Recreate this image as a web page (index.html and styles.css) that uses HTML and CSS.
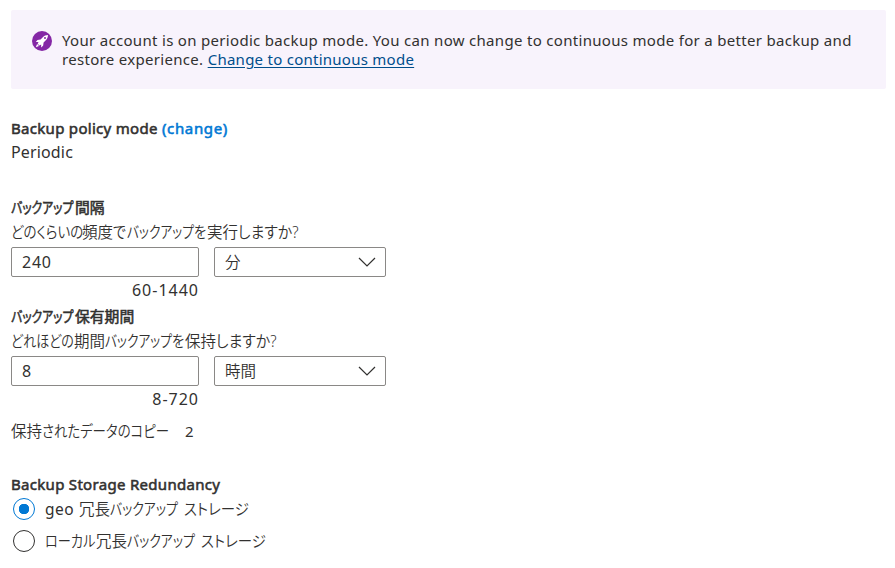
FILE: index.html
```html
<!DOCTYPE html>
<html lang="ja">
<head>
<meta charset="utf-8">
<title>Backup policy</title>
<link rel="stylesheet" href="styles.css">
</head>
<body>
<main class="page">
  <div class="banner">
    <svg class="rocket" viewBox="0 0 20 20" aria-hidden="true">
      <circle cx="10" cy="10" r="10" fill="#8427a5"/>
      <path d="M16 4c-2.200.1-3.800.8-5.200 2.300L8.600 8.500 5.500 9 3.800 11l2.700-.1-.8 1.800 1.700 1.700 1.800-.8-.1 2.900 2-1.800.5-3.200 2.200-2.200C15.200 7.900 15.900 6.200 16 4z" fill="#fff"/>
      <circle cx="13" cy="7" r="1" fill="#8427a5"/>
      <path d="M3.800 16.200l1.300-3.200 1.900 1.900z" fill="#fff"/>
    </svg>
    <p class="banner-text"><span class="line">Your account is on periodic backup mode. You can now change to continuous mode for a better backup and</span><span class="line">restore experience. <a class="link" href="#">Change to continuous mode</a></span></p>
  </div>
  <section class="mode">
    <h2 class="title">Backup policy mode <a class="change" href="#">(change)</a></h2>
    <p class="text periodic">Periodic</p>
  </section>
  <section class="setting">
    <h2 class="title jp"><span class="kana backup-title">バックアップ</span>間隔</h2>
    <p class="text jp"><span class="kana how-often">どのくらいの</span>頻度<span class="kana de">で</span><span class="kana backup">バックアップ</span><span class="kana wo">を</span>実行<span class="kana ask">しますか?</span></p>
    <div class="fields">
      <div class="box input">240</div>
      <div class="box select"><span class="jp">分</span><svg class="chev" viewBox="0 0 18 10"><path d="M1 1l8 8 8-8"/></svg></div>
    </div>
    <p class="range">60-1440</p>
  </section>
  <section class="setting">
    <h2 class="title jp"><span class="kana backup-title">バックアップ</span>保有期間</h2>
    <p class="text jp"><span class="kana how-long">どれほどの</span>期間<span class="kana backup">バックアップ</span><span class="kana wo">を</span>保持<span class="kana ask">しますか?</span></p>
    <div class="fields">
      <div class="box input">8</div>
      <div class="box select"><span class="jp">時間</span><svg class="chev" viewBox="0 0 18 10"><path d="M1 1l8 8 8-8"/></svg></div>
    </div>
    <p class="range">8-720</p>
  </section>
  <p class="text copies"><span class="jp">保持<span class="kana data">されたデータのコピー</span></span><span>2</span></p>
  <section class="storage">
    <h2 class="title redundancy">Backup Storage Redundancy</h2>
    <div class="option"><span class="radio on"></span><span class="jp"><span class="geo">geo</span>冗長<span class="kana backup-option">バックアップ</span><span class="kana store">ストレージ</span></span></div>
    <div class="option"><span class="radio"></span><span class="jp"><span class="kana local">ローカル</span>冗長<span class="kana backup-option">バックアップ</span><span class="kana store">ストレージ</span></span></div>
  </section>
</main>
</body>
</html>
```
FILE: styles.css
```css
* { box-sizing: border-box; }
body { margin: 0; background: #fff; color: #323130; font: 15px/20px "Noto Sans", "Noto Sans CJK JP", sans-serif; letter-spacing: .31px; }
h2, p { margin: 0; }
.page { padding: 10px 9px 0 11px; }
.banner { display: flex; height: 79px; padding: 21px; background: #f8f3fc; border-radius: 2px; }
.rocket { width: 20px; height: 20px; flex: none; margin-right: 10px; }
.banner-text { line-height: 19px; white-space: nowrap; }
.line { display: block; }
.link { color: #004e8c; text-decoration: underline; text-underline-offset: 2px; letter-spacing: .26px; }
.mode { margin-top: 28px; height: 80px; }
.title { font-size: 15px; font-weight: 400; -webkit-text-stroke: .55px currentColor; line-height: 22px; letter-spacing: .3px; white-space: nowrap; }
.change { color: #0078d4; text-decoration: none; letter-spacing: .65px; }
.text { height: 28px; line-height: 27px; white-space: nowrap; }
.periodic { font-size: 16px; letter-spacing: .15px; }

/* Kana runs are set narrower than the kanji beside them. */
.jp { font-feature-settings: "palt"; font-size: 15.5px; font-weight: 350; letter-spacing: 0; }
.title.jp { font-size: 14.800px; font-weight: 400; line-height: 21px; height: 22px; letter-spacing: 0; }
.kana { display: inline-block; transform-origin: 0 50%; white-space: nowrap; }
.backup-title { width: 64px; transform: scaleX(.8); }
.how-often { width: 71px; transform: scaleX(.87); }
.how-long { width: 63px; transform: scaleX(.84); }
.de { width: 14px; transform: scaleX(.9); }
.backup { width: 67px; transform: scaleX(.82); }
.wo { width: 13px; transform: scaleX(.86); }
.ask { width: 61px; transform: scaleX(.96); }
.data { width: 127px; transform: scaleX(.865); }
.backup-option { width: 74px; transform: scaleX(.83); }
.store { width: 65px; transform: scaleX(.93); }
.local { width: 51px; transform: scaleX(.85); }
.geo { display: inline-block; width: 34px; letter-spacing: .5px; font-size: 15.5px; font-weight: 400; }

.setting { height: 109px; }
.fields { display: flex; gap: 15px; }
.box { height: 30px; border: 1px solid #8a8886; border-radius: 2px; padding: 0 10px; line-height: 28px; }
.input { width: 188px; font-size: 16px; letter-spacing: .75px; }
.select { width: 172px; padding-right: 9px; display: flex; justify-content: space-between; align-items: center; }
.chev { width: 18px; height: 10px; fill: none; stroke: #323130; stroke-width: 1.2; }
.range { width: 188px; font-size: 16px; text-align: right; line-height: 26px; letter-spacing: 1px; }
.copies { display: flex; gap: 16px; margin-top: 3px; }
.storage { margin-top: 27px; }
.redundancy { height: 20px; }
.option { display: flex; align-items: center; height: 32px; gap: 10px; white-space: nowrap; }
.radio { width: 22px; height: 22px; border: 1px solid #323130; border-radius: 50%; margin-left: 2px; }
.radio.on { border-color: #0078d4; background: radial-gradient(circle, #0078d4 5px, transparent 5.5px); }
```
